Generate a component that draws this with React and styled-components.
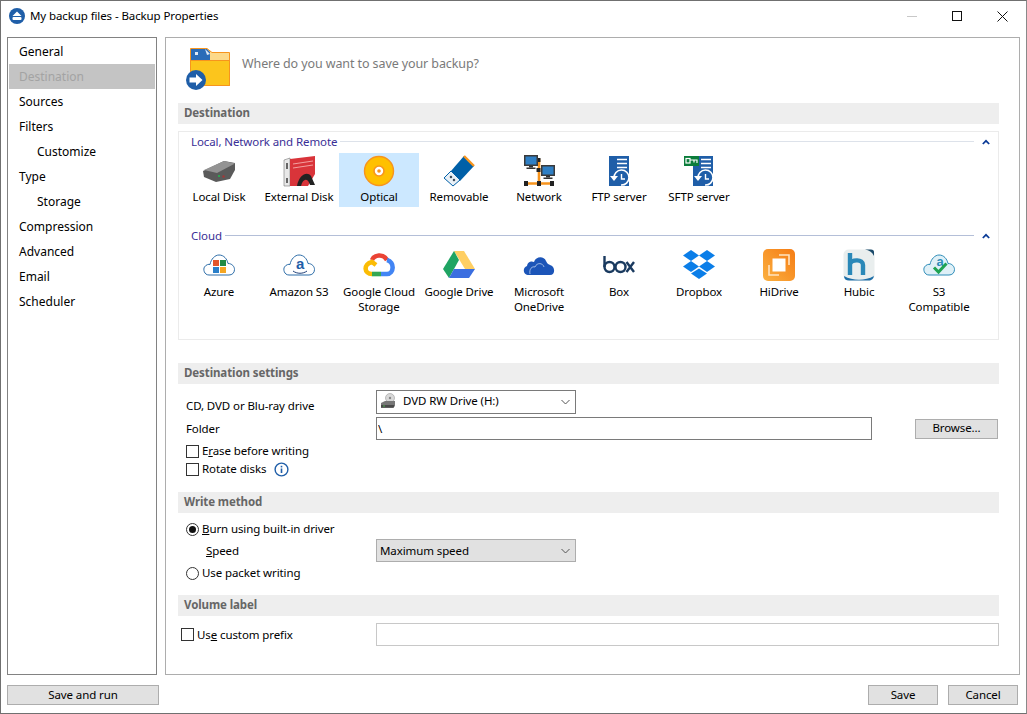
import React from "react";
import styled, { createGlobalStyle } from "styled-components";

const GlobalStyle = createGlobalStyle`
  html, body {
    margin: 0;
    background: #fff;
  }
  body {
    font-family: "Noto Sans", "Open Sans", sans-serif;
    font-size: 11.5px;
    letter-spacing: -0.1px;
    color: #000;
  }
  * { box-sizing: border-box; }
`;

const AppIcon = () => (
  <svg width="16" height="16" viewBox="0 0 16 16">
    <circle cx="8" cy="8" r="8" fill="#1f5ea8" />
    <path d="M8 3.5 L12.5 8 H3.5 Z" fill="#fff" />
    <rect x="3.5" y="9" width="9" height="3" rx="1" fill="#fff" />
  </svg>
);

const HeaderIcon = () => (
  <svg width="46" height="46" viewBox="0 0 46 46">
    <path d="M5.5 1.5 H22 L27 5.5 H44.5 V38.5 H5.5 Z" fill="#fcd98a" stroke="#f7941d" />
    <path d="M6 2 H22 L25 5 V13 H6 Z" fill="#2a6cb8" />
    <path d="M20 2 L25 7 L22 8 Z" fill="#dce8f5" />
    <rect x="10" y="5" width="3" height="3" fill="#dce8f5" />
    <path d="M5.5 13.5 H44.5 V38.5 H5.5 Z" fill="#fcc51c" stroke="#f7941d" />
    <circle cx="11" cy="33" r="10" fill="#1f5ea8" />
    <path d="M4.5 30.5 H11 V27 L17.5 33 L11 39 V35.5 H4.5 Z" fill="#fff" />
  </svg>
);

const LocalDiskIcon = () => (
  <svg width="32" height="32" viewBox="0 0 32 32">
    <path d="M0 16 L21 6 L32 8 V15 L27 24 L13 27 L1 22 Z" fill="#5a5a5a" />
    <path d="M1 15 L21 6 L32 8.5 L14 18 Z" fill="#939393" />
    <rect x="15" y="20" width="2" height="2" fill="#2ea44f" />
    <rect x="19.5" y="20.5" width="2" height="2" fill="#b03030" />
  </svg>
);

const ExternalDiskIcon = () => (
  <svg width="32" height="32" viewBox="0 0 32 32">
    <path d="M1 5 L7 3 V31 H1 Z" fill="#e8e8e8" stroke="#777" strokeWidth="0.6" />
    <path d="M7 4 L32 1 V19 L25 31 H7 Z" fill="#d9343a" />
    <path d="M10 9 L30 6 M10 13 L30 10" stroke="#f3a0a0" strokeWidth="1" />
    <rect x="3" y="8" width="2" height="6" fill="#666" />
    <rect x="3" y="23" width="2" height="5" fill="#666" />
    <path d="M14 31 C16 20 24 16 28 21 L32 30 H27 C25 23 20 23 18 31 Z" fill="#222" />
  </svg>
);

const OpticalIcon = () => (
  <svg width="32" height="32" viewBox="0 0 32 32">
    <circle cx="16" cy="16" r="14.5" fill="#ffc000" stroke="#f7941d" strokeWidth="1.4" />
    <circle cx="16" cy="16" r="5" fill="#fff" stroke="#f7941d" strokeWidth="1.6" />
    <circle cx="16" cy="16" r="1.8" fill="#f7941d" />
  </svg>
);

const RemovableIcon = () => (
  <svg width="32" height="32" viewBox="0 0 32 32">
    <path d="M21 1 L31 11 L17 26 L8 16 Z" fill="#0060a8" />
    <path d="M21 1 L31 11" stroke="#f7941d" strokeWidth="2.4" />
    <path d="M8 16 L17 25 L10 31 L1 23 Z" fill="#e9f0f6" stroke="#0060a8" strokeWidth="1" />
    <rect x="7" y="21" width="2" height="2" fill="#234" transform="rotate(45 8 22)" />
    <rect x="10" y="24" width="2" height="2" fill="#234" transform="rotate(45 11 25)" />
  </svg>
);

const Monitor = ({ x, y }) => (
  <g>
    <rect x={x} y={y} width="14" height="11" fill="#3a3a3a" />
    <rect x={x + 1.5} y={y + 1.5} width="11" height="8" fill="#2f7fc4" />
    <rect x={x + 5} y={y + 11} width="4" height="1.5" fill="#333" />
    <rect x={x + 2.5} y={y + 12.5} width="9" height="1.5" fill="#333" />
  </g>
);

const NetworkIcon = () => (
  <svg width="32" height="32" viewBox="0 0 32 32">
    <path d="M15 5 H16 V28.5 M4 28.5 H27" stroke="#f7941d" strokeWidth="2.6" fill="none" />
    <rect x="13.5" y="3" width="4" height="4" fill="#222" />
    <rect x="13.5" y="13" width="4" height="4" fill="#222" />
    <rect x="1" y="26" width="4" height="5" fill="#222" />
    <rect x="14" y="26" width="4" height="5" fill="#222" />
    <rect x="27" y="26" width="4" height="5" fill="#222" />
    <Monitor x={1} y={0} />
    <Monitor x={18} y={10} />
  </svg>
);

const ServerShape = ({ x }) => (
  <g>
    <rect x={x} y="1" width="20" height="30" fill="#1f5ea8" />
    <path d={`M${x + 8} 4.5 H${x + 18} M${x + 8} 8.5 H${x + 18} M${x + 8} 12.5 H${x + 18}`} stroke="#fff" strokeWidth="1.6" />
    <path d={`M${x + 5} 23 A7.5 7.5 0 1 1 ${x + 12} 30`} stroke="#fff" strokeWidth="1.6" fill="none" />
    <path d={`M${x + 1} 21 H${x + 9} L${x + 5} 26 Z`} fill="#fff" />
    <path d={`M${x + 12.5} 19 V24 H${x + 16}`} stroke="#fff" strokeWidth="1.4" fill="none" />
  </g>
);

const FtpIcon = () => (
  <svg width="32" height="32" viewBox="0 0 32 32">
    <ServerShape x={6} />
  </svg>
);

const SftpIcon = () => (
  <svg width="32" height="32" viewBox="0 0 32 32">
    <ServerShape x={10} />
    <rect x="1" y="1" width="15" height="10" fill="#0b7d3b" />
    <rect x="3" y="3.5" width="4" height="4.5" fill="none" stroke="#fff" strokeWidth="1.2" />
    <path d="M7 5 H14 V8 M11 5 V7.5" stroke="#fff" strokeWidth="1.2" fill="none" />
  </svg>
);

const CLOUD = "M6 26 C1 26 0 20 1.5 18 C3 15.5 6 15 7 15.5 C8 10 12 6 16 6 C21 6 24 10 25 14.5 C29 14.5 31.5 17.5 31.5 20.5 C31.5 24 29 26 26 26 Z";

const AzureIcon = () => (
  <svg width="32" height="32" viewBox="0 0 32 32">
    <path d={CLOUD} fill="#fff" stroke="#2d6da8" strokeWidth="1" />
    <rect x="10" y="11" width="6" height="6" fill="#e2552b" />
    <rect x="17" y="11" width="6" height="6" fill="#1f8a45" />
    <rect x="10" y="18" width="6" height="6" fill="#2a7fc9" />
    <rect x="17" y="18" width="6" height="6" fill="#f5a623" />
  </svg>
);

const AmazonIcon = () => (
  <svg width="32" height="32" viewBox="0 0 32 32">
    <path d={CLOUD} fill="#fff" stroke="#2d6da8" strokeWidth="1" />
    <text x="17" y="20" textAnchor="middle" fontFamily="'Liberation Sans', sans-serif" fontWeight="700" fontSize="15" fill="#1f5ea8">a</text>
    <path d="M10 22 C14 25 20 25 24 22" stroke="#1f3f78" strokeWidth="1" fill="none" />
  </svg>
);

const GoogleCloudIcon = () => (
  <svg width="32" height="32" viewBox="0 0 32 32">
    <g fill="none" strokeWidth="4.6">
      <path d="M9 11 C11 6 20 4 24 11" stroke="#ea4335" />
      <path d="M24 11 C32 13 31 25 24 25 H18" stroke="#4285f4" />
      <path d="M18 25 H9" stroke="#34a853" />
      <path d="M9 25 C1 25 0 15 9 13 L13 16" stroke="#fbbc05" />
    </g>
  </svg>
);

const GoogleDriveIcon = () => (
  <svg width="32" height="32" viewBox="0 0 32 32">
    <path d="M11 2 H21 L32 20 H22 Z" fill="#ffcf63" />
    <path d="M11 2 L16 11 L6 29 L0 20 Z" fill="#1fa463" />
    <path d="M11 20 H32 L26 29 H6 Z" fill="#3b6ee0" />
  </svg>
);

const OneDriveIcon = () => (
  <svg width="32" height="32" viewBox="0 0 32 32">
    <path d="M6 26 C0 26 -1 19 4 17 C5 12 9 12 11 13 C13 7 21 7 23 12 C25 16 26 15 27 16 C32 17 33 26 27 26 Z" fill="#1c55b8" />
    <path d="M7 25 C6 20 9 17 12 18 C14 13 20 14 21 18" stroke="#bcd0ef" strokeWidth="0.8" fill="none" />
  </svg>
);

const BoxIcon = () => (
  <svg width="32" height="32" viewBox="0 0 32 32">
    <g fill="none" stroke="#1a3a5f" strokeWidth="2.4">
      <path d="M1.5 7 V18" />
      <circle cx="6.5" cy="18" r="5" />
      <circle cx="17.5" cy="18" r="5" />
      <path d="M23.5 13 L31 23 M31 13 L23.5 23" />
    </g>
  </svg>
);

const DropboxIcon = () => (
  <svg width="32" height="32" viewBox="0 0 32 32">
    <g fill="#0b7ee8">
      <path d="M8 1 L16 6.5 L8 12 L0 6.5 Z" />
      <path d="M24 1 L32 6.5 L24 12 L16 6.5 Z" />
      <path d="M8 12 L16 17.5 L8 23 L0 17.5 Z" />
      <path d="M24 12 L32 17.5 L24 23 L16 17.5 Z" />
      <path d="M8 24.5 L16 19.5 L24 24.5 L16 30 Z" />
    </g>
  </svg>
);

const HiDriveIcon = () => (
  <svg width="32" height="32" viewBox="0 0 32 32">
    <defs>
      <linearGradient id="hidrive" x1="0" y1="1" x2="1" y2="0">
        <stop offset="0" stopColor="#fbb040" />
        <stop offset="1" stopColor="#f57c14" />
      </linearGradient>
    </defs>
    <rect width="32" height="32" rx="5" fill="url(#hidrive)" />
    <path d="M6 16 V26 H16" stroke="#ffe3c0" strokeWidth="1.6" fill="none" />
    <path d="M16 6 H26 V16" stroke="#ffe3c0" strokeWidth="1.6" fill="none" />
    <rect x="9.5" y="9.5" width="13" height="13" fill="#fff" />
  </svg>
);

const HubicIcon = () => (
  <svg width="32" height="32" viewBox="0 0 32 32">
    <rect x="0.5" y="0.5" width="31" height="31" rx="5" fill="#e9eeee" />
    <path d="M1 27 C10 32 22 32 31 27 V26 C31 30 28 31.5 26 31.5 H6 C3 31.5 1 30 1 27 Z" fill="#1f6fa8" />
    <path d="M22 0.5 C26 1 29 3 31 7 V3 C31 1.5 30 0.5 28 0.5 Z" fill="#1a4a6a" />
    <path d="M7 4 V26 M7 15 C9 10 20 10 20 16 V26" fill="none" stroke="#2a88b8" strokeWidth="4.4" />
  </svg>
);

const S3Icon = () => (
  <svg width="32" height="32" viewBox="0 0 32 32">
    <path d={CLOUD} fill="#dff0f7" stroke="#2d8cb8" strokeWidth="1" />
    <text x="17" y="17" textAnchor="middle" fontFamily="'Liberation Sans', sans-serif" fontWeight="700" fontSize="13" fill="#2d8cb8">a</text>
    <path d="M11 18.5 L15.5 23 L23.5 14.5" stroke="#1fa352" strokeWidth="3" fill="none" />
  </svg>
);

const Chevron = () => (
  <svg width="9" height="6" viewBox="0 0 9 6">
    <path d="M0.5 1 L4.5 5 L8.5 1" stroke="#555" fill="none" />
  </svg>
);

const CollapseArrow = () => (
  <svg width="8" height="6" viewBox="0 0 8 6">
    <path d="M0.8 5 L4 1.8 L7.2 5" stroke="#0a3a96" strokeWidth="1.7" fill="none" />
  </svg>
);

const DriveIcon = () => (
  <svg width="16" height="16" viewBox="0 0 16 16">
    <circle cx="10" cy="5" r="4.5" fill="#d8d8d8" stroke="#999" strokeWidth="0.6" />
    <circle cx="10" cy="5" r="1.2" fill="#888" />
    <path d="M1 10 L5 8 H15 V13 L13 15 H1 Z" fill="#777" />
    <rect x="1" y="12" width="13" height="2.5" fill="#4a4a4a" />
    <rect x="3" y="12.5" width="2" height="1" fill="#4caf50" />
  </svg>
);

const InfoIcon = () => (
  <svg width="15" height="15" viewBox="0 0 15 15">
    <circle cx="7.5" cy="7.5" r="6.4" fill="none" stroke="#1f5ea8" strokeWidth="1.4" />
    <rect x="6.7" y="6.5" width="1.6" height="4.5" fill="#1f5ea8" />
    <rect x="6.7" y="3.8" width="1.6" height="1.6" fill="#1f5ea8" />
  </svg>
);

const navItems = [
  { label: "General" },
  { label: "Destination", active: true },
  { label: "Sources" },
  { label: "Filters" },
  { label: "Customize", sub: true },
  { label: "Type" },
  { label: "Storage", sub: true },
  { label: "Compression" },
  { label: "Advanced" },
  { label: "Email" },
  { label: "Scheduler" },
];

const localTiles = [
  { label: "Local Disk", Icon: LocalDiskIcon },
  { label: "External Disk", Icon: ExternalDiskIcon },
  { label: "Optical", Icon: OpticalIcon, selected: true },
  { label: "Removable", Icon: RemovableIcon },
  { label: "Network", Icon: NetworkIcon },
  { label: "FTP server", Icon: FtpIcon },
  { label: "SFTP server", Icon: SftpIcon },
];

const cloudTiles = [
  { label: "Azure", Icon: AzureIcon },
  { label: "Amazon S3", Icon: AmazonIcon },
  { label: "Google Cloud\nStorage", Icon: GoogleCloudIcon },
  { label: "Google Drive", Icon: GoogleDriveIcon },
  { label: "Microsoft\nOneDrive", Icon: OneDriveIcon },
  { label: "Box", Icon: BoxIcon },
  { label: "Dropbox", Icon: DropboxIcon },
  { label: "HiDrive", Icon: HiDriveIcon },
  { label: "Hubic", Icon: HubicIcon },
  { label: "S3\nCompatible", Icon: S3Icon },
];

const App = () => {
  return (
    <Window>
      <GlobalStyle />
      <TitleBar>
        <AppIcon />
        <TitleText>My backup files - Backup Properties</TitleText>
        <WindowControls>
          <MinimizeGlyph />
          <MaximizeGlyph />
          <svg width="11" height="11" viewBox="0 0 11 11">
            <path d="M0.5 0.5 L10.5 10.5 M10.5 0.5 L0.5 10.5" stroke="#111" />
          </svg>
        </WindowControls>
      </TitleBar>

      <Main>
        <Sidebar>
          {navItems.map((item) => (
            <NavItem key={item.label} $active={item.active} $sub={item.sub}>
              {item.label}
            </NavItem>
          ))}
        </Sidebar>

        <Content>
          <Intro>
            <HeaderIcon />
            <IntroText>Where do you want to save your backup?</IntroText>
          </Intro>

          <SectionTitle>Destination</SectionTitle>
          <GroupPanel>
            <GroupHeading>
              <span>Local, Network and Remote</span>
              <GroupLine />
              <CollapseArrow />
            </GroupHeading>
            <TileRow>
              {localTiles.map(({ label, Icon, selected }) => (
                <Tile key={label} $selected={selected}>
                  <Icon />
                  <TileLabel $top={2}>{label}</TileLabel>
                </Tile>
              ))}
            </TileRow>
            <GroupHeading $cloud>
              <span>Cloud</span>
              <GroupLine $dark />
              <CollapseArrow />
            </GroupHeading>
            <TileRow>
              {cloudTiles.map(({ label, Icon }) => (
                <Tile key={label}>
                  <Icon />
                  <TileLabel $top={3}>{label}</TileLabel>
                </Tile>
              ))}
            </TileRow>
          </GroupPanel>

          <SectionTitle $top={23}>Destination settings</SectionTitle>
          <DriveRow>
            <FieldLabel>CD, DVD or Blu-ray drive</FieldLabel>
            <Combo>
              <ComboValue>
                <DriveIcon />
                DVD RW Drive (H:)
              </ComboValue>
              <Chevron />
            </Combo>
          </DriveRow>
          <FolderRow>
            <FieldLabel>Folder</FieldLabel>
            <TextField readOnly value="\" />
            <PushButton $width={83}>Browse...</PushButton>
          </FolderRow>
          <CheckRow $top={2}>
            <CheckBox />
            <span>E<u>r</u>ase before writing</span>
          </CheckRow>
          <CheckRow $top={0}>
            <CheckBox />
            <span>Rotate disks</span>
            <InfoSlot>
              <InfoIcon />
            </InfoSlot>
          </CheckRow>

          <SectionTitle $top={14}>Write method</SectionTitle>
          <CheckRow $top={7}>
            <Radio $checked />
            <span><u>B</u>urn using built-in driver</span>
          </CheckRow>
          <SpeedRow>
            <SpeedLabel><u>S</u>peed</SpeedLabel>
            <Combo $filled>
              <span>Maximum speed</span>
              <Chevron />
            </Combo>
          </SpeedRow>
          <CheckRow $top={2}>
            <Radio />
            <span>Use packet writing</span>
          </CheckRow>

          <SectionTitle $top={13}>Volume label</SectionTitle>
          <PrefixRow>
            <PrefixCheck>
              <CheckBox />
              <span>Us<u>e</u> custom prefix</span>
            </PrefixCheck>
            <TextField $light readOnly value="" />
          </PrefixRow>
        </Content>
      </Main>

      <Footer>
        <PushButton $width={152}>Save and run</PushButton>
        <FooterRight>
          <PushButton $width={70}>Save</PushButton>
          <PushButton $width={70}>Cancel</PushButton>
        </FooterRight>
      </Footer>
    </Window>
  );
};

const Window = styled.div`
  width: 1027px;
  height: 714px;
  display: flex;
  flex-direction: column;
  border: 1px solid #707070;
  border-right-color: #8a8a8a;
  background: #fff;
  overflow: hidden;
`;

const TitleBar = styled.div`
  height: 36px;
  flex: none;
  display: flex;
  align-items: center;
  padding: 0 18px 6px 8px;
`;

const TitleText = styled.div`
  margin: -2px 0 0 5px;
  flex: 1;
`;

const WindowControls = styled.div`
  display: flex;
  align-items: center;
  gap: 35px;
`;

const MinimizeGlyph = styled.div`
  width: 10px;
  height: 1px;
  background: #c8c8c8;
`;

const MaximizeGlyph = styled.div`
  width: 10px;
  height: 10px;
  border: 1px solid #111;
`;

const Main = styled.div`
  height: 638px;
  flex: none;
  display: flex;
  gap: 8px;
  padding: 0 6px;
`;

const Sidebar = styled.div`
  width: 150px;
  flex: none;
  border: 1px solid #828282;
  padding: 1px;
`;

const NavItem = styled.div`
  height: 25px;
  line-height: 25px;
  padding-left: ${(p) => (p.$sub ? 28 : 10)}px;
  font-size: 12px;
  letter-spacing: 0;
  color: ${(p) => (p.$active ? "#a3a3a3" : "#000")};
  background: ${(p) => (p.$active ? "#c4c4c4" : "transparent")};
`;

const Content = styled.div`
  flex: 1;
  border: 1px solid #adadad;
  padding: 9px 20px 0 12px;
`;

const Intro = styled.div`
  height: 48px;
  display: flex;
  align-items: flex-start;
  padding-left: 7px;
`;

const IntroText = styled.div`
  margin-left: 11px;
  margin-top: 8px;
  color: #7a7a7a;
  font-size: 12.5px;
`;

const SectionTitle = styled.div`
  height: 21px;
  line-height: 20px;
  margin-top: ${(p) => p.$top ?? 8}px;
  padding-left: 6px;
  background: #eeeeee;
  color: #666;
  font-weight: 700;
`;

const GroupPanel = styled.div`
  height: 209px;
  margin-top: 7px;
  border: 1px solid #ebebeb;
`;

const GroupHeading = styled.div`
  height: 21px;
  display: flex;
  align-items: center;
  gap: 3px;
  padding: 0 8px 1px 12px;
  color: #3a2f96;
  margin-top: ${(p) => (p.$cloud ? 19 : 0)}px;
  & > span {
    margin-top: -2px;
  }
  & > svg {
    margin-left: 5px;
  }
`;

const GroupLine = styled.div`
  flex: 1;
  height: 1px;
  margin-top: -2px;
  background: ${(p) => (p.$dark ? "#b4bfd8" : "#dde2ea")};
`;

const TileRow = styled.div`
  display: flex;
`;

const Tile = styled.div`
  width: 80px;
  min-height: 54px;
  display: flex;
  flex-direction: column;
  align-items: center;
  padding-top: 2px;
  background: ${(p) => (p.$selected ? "#cce8ff" : "transparent")};
  align-self: flex-start;
`;

const TileLabel = styled.div`
  margin-top: ${(p) => p.$top}px;
  text-align: center;
  line-height: 15px;
  white-space: pre-line;
`;

const FieldLabel = styled.div`
  width: 198px;
  flex: none;
  padding-left: 8px;
`;

const DriveRow = styled.div`
  height: 24px;
  margin-top: 6px;
  display: flex;
  align-items: center;
  & > ${FieldLabel} {
    margin-top: 6px;
  }
`;

const FolderRow = styled.div`
  height: 23px;
  margin-top: 3px;
  display: flex;
  align-items: center;
`;

const Combo = styled.div`
  width: 200px;
  height: ${(p) => (p.$filled ? 23 : 24)}px;
  flex: none;
  display: flex;
  align-items: center;
  justify-content: space-between;
  padding: 0 5px 0 3px;
  border: 1px solid ${(p) => (p.$filled ? "#adadad" : "#7a7a7a")};
  background: ${(p) => (p.$filled ? "#e1e1e1" : "#fff")};
`;

const ComboValue = styled.div`
  display: flex;
  align-items: center;
  gap: 7px;
  padding-bottom: 3px;
`;

const TextField = styled.input`
  flex: 1;
  min-width: 0;
  max-width: ${(p) => (p.$light ? "none" : "496px")};
  height: 23px;
  padding: 0 1px;
  border: 1px solid ${(p) => (p.$light ? "#c8c8c8" : "#7a7a7a")};
  font: inherit;
  letter-spacing: inherit;
  color: #000;
  outline: none;
`;

const PushButton = styled.button`
  width: ${(p) => p.$width}px;
  height: 20px;
  flex: none;
  padding: 0 0 2px;
  margin: 0;
  border: 1px solid #adadad;
  background: #e1e1e1;
  font: inherit;
  letter-spacing: inherit;
  color: #000;
  ${FolderRow} & {
    margin-left: 43px;
  }
`;

const CheckBox = styled.div`
  width: 13px;
  height: 13px;
  flex: none;
  border: 1px solid #333;
  background: #fff;
`;

const Radio = styled.div`
  width: 13px;
  height: 13px;
  flex: none;
  border: 1px solid #333;
  border-radius: 50%;
  background: #fff;
  display: flex;
  align-items: center;
  justify-content: center;
  &::after {
    content: "";
    width: 7px;
    height: 7px;
    border-radius: 50%;
    background: ${(p) => (p.$checked ? "#111" : "transparent")};
  }
`;

const CheckRow = styled.div`
  height: 18px;
  margin-top: ${(p) => p.$top}px;
  display: flex;
  align-items: center;
  gap: 3px;
  padding-left: 8px;
  & > span {
    margin-top: -2px;
  }
`;

const InfoSlot = styled.div`
  display: flex;
  margin-left: 5px;
`;

const SpeedRow = styled.div`
  height: 23px;
  margin-top: 1px;
  display: flex;
  align-items: center;
`;

const SpeedLabel = styled.div`
  width: 198px;
  flex: none;
  padding-left: 28px;
`;

const PrefixRow = styled.div`
  height: 23px;
  margin-top: 7px;
  display: flex;
  align-items: center;
`;

const PrefixCheck = styled.div`
  width: 198px;
  flex: none;
  display: flex;
  align-items: center;
  gap: 3px;
  padding-left: 3px;
`;

const Footer = styled.div`
  flex: 1;
  display: flex;
  justify-content: space-between;
  padding: 10px 8px 0 6px;
`;

const FooterRight = styled.div`
  display: flex;
  gap: 10px;
`;

export default App;
